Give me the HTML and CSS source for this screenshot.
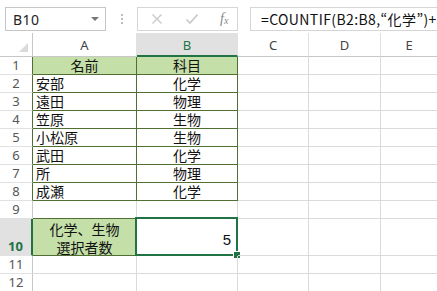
FILE: index.html
```html
<!DOCTYPE html>
<html lang="ja">
<head>
<meta charset="utf-8">
<link rel="stylesheet" href="styles.css">
</head>
<body>
<div class="app">
  <div class="fbar">
    <div class="namebox"><span class="ref">B10</span><span class="dd"></span></div>
    <div class="grip"><i></i><i></i><i></i></div>
    <div class="btnbox">
      <svg class="ic" width="12" height="12" viewBox="0 0 12 12"><path d="M1.5 1.5 L10.5 10.5 M10.5 1.5 L1.5 10.5" stroke="#c8c8c8" stroke-width="1.3" fill="none"/></svg>
      <svg class="ic ok" width="14" height="12" viewBox="0 0 14 12"><path d="M1.5 6.5 L5 10 L12.5 1.5" stroke="#c8c8c8" stroke-width="1.6" fill="none"/></svg>
      <span class="fx">f<sub>x</sub></span>
    </div>
    <div class="formula">=COUNTIF(B2:B8,“化学”)+</div>
  </div>
  <div class="sheet">
    <div class="hd corner"><span class="tri"></span></div>
    <div class="hd col">A</div>
    <div class="hd col sel">B</div>
    <div class="hd col">C</div>
    <div class="hd col">D</div>
    <div class="hd col last">E</div>

    <div class="rh tb">1</div><div class="c ta th">名前</div><div class="c tb2 th ctr">科目</div><div class="c"></div><div class="c"></div><div class="c last"></div>
    <div class="rh tb">2</div><div class="c ta">安部</div><div class="c tb2 ctr">化学</div><div class="c"></div><div class="c"></div><div class="c last"></div>
    <div class="rh tb">3</div><div class="c ta">遠田</div><div class="c tb2 ctr">物理</div><div class="c"></div><div class="c"></div><div class="c last"></div>
    <div class="rh tb">4</div><div class="c ta">笠原</div><div class="c tb2 ctr">生物</div><div class="c"></div><div class="c"></div><div class="c last"></div>
    <div class="rh tb">5</div><div class="c ta">小松原</div><div class="c tb2 ctr">生物</div><div class="c"></div><div class="c"></div><div class="c last"></div>
    <div class="rh tb">6</div><div class="c ta">武田</div><div class="c tb2 ctr">化学</div><div class="c"></div><div class="c"></div><div class="c last"></div>
    <div class="rh tb">7</div><div class="c ta">所</div><div class="c tb2 ctr">物理</div><div class="c"></div><div class="c"></div><div class="c last"></div>
    <div class="rh tb">8</div><div class="c ta">成瀬</div><div class="c tb2 ctr">化学</div><div class="c"></div><div class="c"></div><div class="c last"></div>
    <div class="rh">9</div><div class="c r9a"></div><div class="c r9b"></div><div class="c"></div><div class="c"></div><div class="c last"></div>
    <div class="rh rsel">10</div><div class="c ta th lbl">化学、生物<br>選択者数</div><div class="c active"><span class="num">5</span><span class="selbox"></span><span class="handle"></span></div><div class="c"></div><div class="c"></div><div class="c last"></div>
    <div class="rh">11</div><div class="c"></div><div class="c"></div><div class="c"></div><div class="c"></div><div class="c last"></div>
    <div class="rh">12</div><div class="c"></div><div class="c"></div><div class="c"></div><div class="c"></div><div class="c last"></div>
  </div>
</div>
</body>
</html>
```

FILE: styles.css
```css
* { box-sizing: border-box; }
html, body { margin: 0; padding: 0; background: #fff; overflow: hidden; }
.app { width: 437px; height: 291px; overflow: hidden; font-family: "Noto Sans", "Noto Sans CJK JP", sans-serif; }

.fbar { height: 33px; display: flex; align-items: flex-start; padding-top: 7px; padding-left: 5px; background: #fff; }
.namebox { width: 101px; height: 24px; border: 1px solid #c6c6c6; display: flex; align-items: center; justify-content: space-between; padding: 0 6px 0 7px; }
.ref { font-size: 14px; color: #222; letter-spacing: 0.5px; }
.dd { width: 0; height: 0; border-left: 4px solid transparent; border-right: 4px solid transparent; border-top: 4px solid #777; }
.grip { width: 31px; height: 24px; display: flex; flex-direction: column; align-items: center; justify-content: center; gap: 2px; }
.grip i { width: 2px; height: 2px; background: #bdbdbd; display: block; }
.btnbox { width: 101px; height: 24px; border: 1px solid #d6d6d6; display: flex; align-items: center; padding-left: 13px; }
.ic { display: block; }
.ok { margin-left: 22px; }
.fx { margin-left: 21px; font-family: "Liberation Serif", serif; font-style: italic; font-size: 14px; color: #888; line-height: 1; }
.fx sub { font-size: 10px; vertical-align: -1px; }
.formula { margin-left: 12px; flex: 1; min-width: 0; height: 24px; border: 1px solid #d6d6d6; border-right: none; padding-left: 10px; font-family: "Noto Sans CJK JP", sans-serif; font-size: 14px; line-height: 22px; color: #111; white-space: nowrap; letter-spacing: 0.4px; }

.sheet { display: grid; grid-template-columns: 33px 104px 101px 71px 72px 56px; grid-template-rows: 24px repeat(9, 18px) 37px 18px 18px; }
.hd { background: #fff; border-right: 1px solid #e1e1e1; border-bottom: 1px solid #c8c8c8; font-size: 13px; color: #444; display: flex; align-items: center; justify-content: center; padding-top: 1px; }
.hd.corner { position: relative; border-right: 1px solid #c8c8c8; }
.tri { position: absolute; right: 4px; bottom: 4px; width: 0; height: 0; border-left: 9px solid transparent; border-bottom: 9px solid #dadada; }
.hd.sel { background: #e1e1e1; color: #217346; border-bottom: 2px solid #217346; padding-top: 2px; }
.hd.last, .c.last { border-right: none; }

.rh { background: #fff; border-right: 1px solid #c8c8c8; border-bottom: 1px solid #e1e1e1; font-size: 13px; color: #555; display: flex; align-items: flex-end; justify-content: center; line-height: 17px; }
.rh.tb { border-right-color: #4f6f33; }
.rh.rsel { background: #e1e1e1; color: #217346; font-weight: bold; border-right: 2px solid #217346; }

.c { border-right: 1px solid #dadada; border-bottom: 1px solid #dadada; font-family: "Noto Sans CJK JP", sans-serif; font-size: 14px; color: #111; line-height: 17px; padding: 0 3px; white-space: nowrap; position: relative; }
.c.ta { border-right-color: #4f6f33; border-bottom-color: #4f6f33; }
.c.tb2 { border-right-color: #4f6f33; border-bottom-color: #4f6f33; }
.c.th { background: #c4dfa8; }
.ctr { text-align: center; }
.c.th.ta { text-align: center; }
.c.r9a { border-bottom-color: #4f6f33; }
.c.lbl { line-height: 18px; display: flex; align-items: center; justify-content: center; text-align: center; padding-top: 1px; }
.c.active { display: flex; align-items: flex-end; justify-content: flex-end; padding: 0 6px 7px 0; }
.num { font-family: "Liberation Sans", sans-serif; font-size: 15px; }
.selbox { position: absolute; left: -2px; top: -2px; right: -1px; bottom: -1px; border: 2px solid #217346; pointer-events: none; }
.handle { position: absolute; right: -4px; bottom: -4px; width: 6px; height: 6px; background: #217346; border: 1px solid #fff; box-sizing: content-box; }
```
